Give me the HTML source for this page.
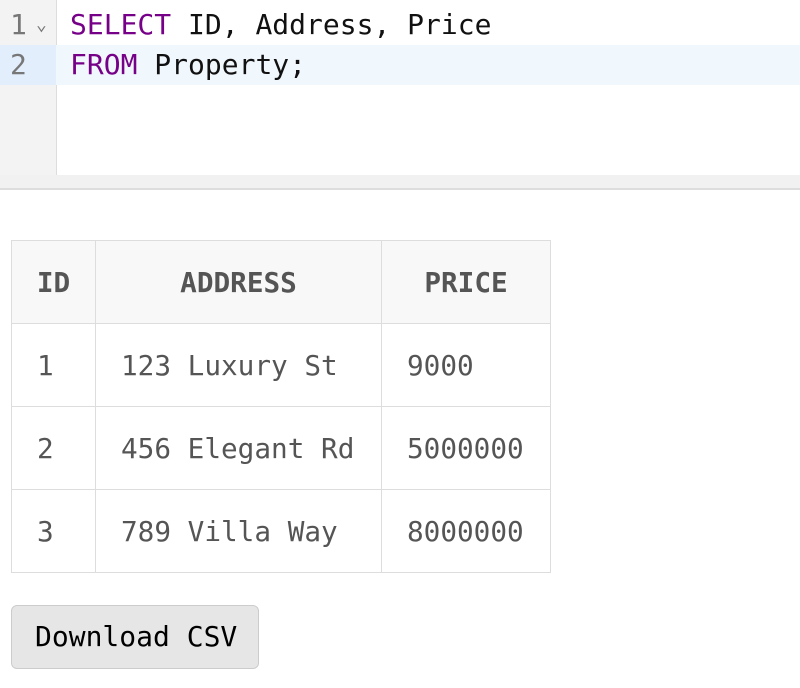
<!DOCTYPE html>
<html><head><style>
body{margin:0;width:800px;height:688px;background:#fff;font-family:"DejaVu Sans Mono","Liberation Mono",monospace;position:relative;overflow:hidden}
.ed{position:absolute;left:0;top:0;width:800px;height:175px;border-bottom:1px solid #ddd}
.gut{position:absolute;left:0;top:0;width:56px;height:175px;background:#f3f3f3;border-right:1px solid #ddd}
.strip{position:absolute;left:0;top:175px;width:800px;height:13px;background:#f1f1f1;border-bottom:2px solid #ddd}
.ln{position:absolute;left:0;width:800px;height:40px;line-height:40px;font-size:28px}
.num{position:absolute;left:10px;color:#777}
.code{position:absolute;left:70px;color:#111}
.kw{color:#708}
table{position:absolute;left:11px;top:240px;border-collapse:collapse;table-layout:fixed;width:539px;font-size:27.7px;color:#555}
td,th{border:1px solid #ddd;height:82px;padding:0 0 0 25px;text-align:left;white-space:nowrap;overflow:hidden}
th{background:#f8f8f8;text-align:center;font-weight:bold;padding:0}
.btn{position:absolute;left:11px;top:605px;width:246px;height:62px;background:#e6e6e6;border:1px solid #ccc;border-radius:6px;font-size:28px;line-height:62px;color:#000;box-sizing:content-box}
.btn span{position:absolute;left:23px}
</style></head><body>
<div class="ed">
<div class="gut"></div>
<div class="ln" style="top:5px"><span class="num">1</span><span style="position:absolute;left:36px;top:0;font-size:18px;color:#777">⌄</span><span class="code"><span class="kw">SELECT</span> ID, Address, Price</span></div>
<div class="ln" style="top:45px;background:#f0f7fd"><span style="position:absolute;left:0;top:0;width:56px;height:40px;background:#e2eefc"></span><span class="num">2</span><span class="code"><span class="kw">FROM</span> Property;</span></div>
</div>
<div class="strip"></div>
<table>
<colgroup><col style="width:84px"><col style="width:286px"><col style="width:169px"></colgroup>
<tr><th>ID</th><th>ADDRESS</th><th>PRICE</th></tr>
<tr><td>1</td><td>123 Luxury St</td><td>9000</td></tr>
<tr><td>2</td><td>456 Elegant Rd</td><td>5000000</td></tr>
<tr><td>3</td><td>789 Villa Way</td><td>8000000</td></tr>
</table>
<div class="btn"><span>Download CSV</span></div>
</body></html>
